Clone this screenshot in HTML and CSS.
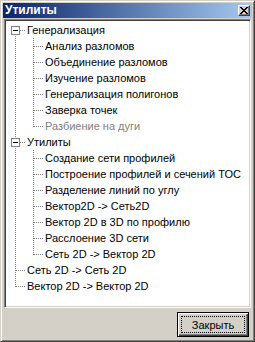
FILE: index.html
```html
<!DOCTYPE html>
<html>
<head>
  <meta charset="UTF-8">
  <link rel="stylesheet" href="styles.css">
</head>
<body>
  <div class="window">
    <div class="titlebar">
      <span class="caption">Утилиты</span>
      <span class="close">
        <svg width="8" height="7" viewBox="0 0 8 7"><path d="M0 0h2v1h1v1h2v-1h1v-1h2v1h-1v1h-1v1h-1v1h1v1h1v1h1v1h-2v-1h-1v-1h-2v1h-1v1h-2v-1h1v-1h1v-1h1v-1h-1v-1h-1v-1h-1z" fill="#000"/></svg>
      </span>
    </div>

    <div class="tree">
      <ul class="nodes root">
        <li class="node first">
          <div class="row"><span class="box"></span><span class="label">Генерализация</span></div>
          <ul class="nodes">
            <li class="node"><div class="row"><span class="label">Анализ разломов</span></div></li>
            <li class="node"><div class="row"><span class="label">Объединение разломов</span></div></li>
            <li class="node"><div class="row"><span class="label">Изучение разломов</span></div></li>
            <li class="node"><div class="row"><span class="label">Генерализация полигонов</span></div></li>
            <li class="node"><div class="row"><span class="label">Заверка точек</span></div></li>
            <li class="node last"><div class="row"><span class="label disabled">Разбиение на дуги</span></div></li>
          </ul>
        </li>
        <li class="node">
          <div class="row"><span class="box"></span><span class="label">Утилиты</span></div>
          <ul class="nodes">
            <li class="node"><div class="row"><span class="label">Создание сети профилей</span></div></li>
            <li class="node"><div class="row"><span class="label">Построение профилей и сечений ТОС</span></div></li>
            <li class="node"><div class="row"><span class="label">Разделение линий по углу</span></div></li>
            <li class="node"><div class="row"><span class="label">Вектор2D -&gt; Сеть2D</span></div></li>
            <li class="node"><div class="row"><span class="label">Вектор 2D в 3D по профилю</span></div></li>
            <li class="node"><div class="row"><span class="label">Расслоение 3D сети</span></div></li>
            <li class="node last"><div class="row"><span class="label">Сеть 2D -&gt; Вектор 2D</span></div></li>
          </ul>
        </li>
        <li class="node"><div class="row"><span class="label">Сеть 2D -&gt; Сеть 2D</span></div></li>
        <li class="node last"><div class="row"><span class="label">Вектор 2D -&gt; Вектор 2D</span></div></li>
      </ul>
    </div>

    <div class="footer">
      <button class="btn default"><span class="focus">Закрыть</span></button>
    </div>
  </div>
</body>
</html>
```

FILE: styles.css
```css
body { margin: 0; background: #D4D0C8; }

.window {
  width: 255px; height: 342px; box-sizing: border-box;
  display: flex; flex-direction: column;
  background: #D4D0C8;
  border: 1px solid; border-color: #D4D0C8 #404040 #404040 #D4D0C8;
  box-shadow: inset 1px 1px #FFFFFF, inset -1px -1px #808080;
  padding: 2px;
  font-family: "Liberation Sans", Arial, sans-serif; font-size: 11px; color: #000;
}

/* caption */
.titlebar {
  height: 15px; flex: none;
  display: flex; align-items: center; justify-content: space-between;
  padding: 0 2px 0 2px;
  background: linear-gradient(to right, #0A246A, #A6CAF0);
}
.caption { color: #fff; font-weight: bold; font-size: 12px; line-height: 15px; }
.close {
  width: 12px; height: 11px; box-sizing: border-box;
  display: flex; align-items: center; justify-content: center;
  background: #D4D0C8;
  border: 1px solid; border-color: #FFFFFF #404040 #404040 #FFFFFF;
  box-shadow: inset -1px -1px #808080;
}
.close svg { display: block; margin: 0 1px 1px 0; }

/* tree view */
.tree {
  flex: 1; margin: 1px 1px 0 1px;
  background: #fff;
  border: 1px solid; border-color: #808080 #FFFFFF #FFFFFF #808080;
  box-shadow: inset 1px 1px #404040, inset -1px -1px #D4D0C8;
  padding: 2px 1px 1px 1px;
  overflow: hidden;
}
.nodes { list-style: none; margin: 0; padding: 0; }
.nodes .nodes { margin-left: 18px; }
.node { position: relative; }
.node::before {
  content: ""; position: absolute; left: 10px; top: 8px; width: 9px; height: 1px;
  background: repeating-linear-gradient(to right, #808080 0 1px, transparent 1px 2px);
}
.node::after {
  content: ""; position: absolute; left: 9px; top: 0; bottom: 0; width: 1px;
  background: repeating-linear-gradient(to bottom, #808080 0 1px, transparent 1px 2px);
}
.node.first::after { top: 8px; }
.node.last::after { bottom: auto; height: 9px; }

.row { position: relative; height: 16px; line-height: 16px; padding-left: 21px; white-space: nowrap; z-index: 1; }
.label.disabled { color: #808080; }
.box {
  position: absolute; left: 5px; top: 4px; width: 9px; height: 9px; box-sizing: border-box;
  border: 1px solid #808080; background: #fff;
}
.box::after { content: ""; position: absolute; left: 1px; top: 3px; width: 5px; height: 1px; background: #000; }

/* buttons */
.footer {
  height: 31px; flex: none; box-sizing: border-box;
  display: flex; justify-content: flex-end;
  padding: 4px 3px 2px 0;
}
.btn {
  width: 72px; height: 25px; box-sizing: border-box; margin: 0;
  display: flex; padding: 3px;
  background: #D4D0C8;
  border: 1px solid #000;
  box-shadow: inset 1px 1px #FFFFFF, inset -1px -1px #404040, inset -2px -2px #808080;
  font: inherit; color: #000;
}
.btn .focus {
  flex: 1; display: flex; align-items: center; justify-content: center;
  border: 1px dotted #000;
}
```
